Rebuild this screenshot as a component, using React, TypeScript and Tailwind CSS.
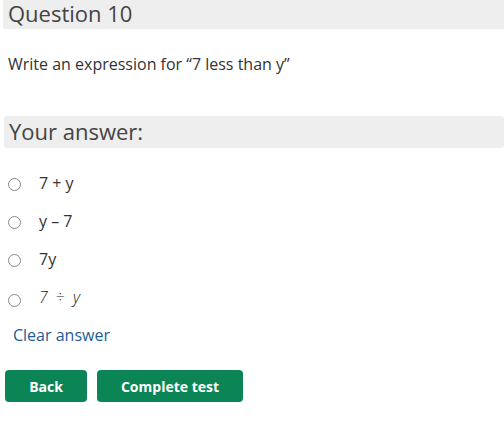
import React from 'react';

const options = ['7 + y', 'y – 7', '7y'];

const Radio = () => (
    <span className="inline-block w-[13px] h-[13px] rounded-full border border-[#8a8a8a] bg-white shrink-0" />
);

const App = () => {
    return (
        <div className="w-[504px] h-[431px] bg-white text-[#333] overflow-hidden" style={{ fontFamily: '"Open Sans", sans-serif' }}>
            <div className="ml-[3px] h-[29px] bg-[#eeeeee] rounded-bl-[3px] pl-[5px] flex items-start">
                <h2 className="text-[22px] leading-[26px] text-[#444]">Question 10</h2>
            </div>

            <p className="mt-[24px] ml-[8px] text-[16px] leading-[22px]">Write an expression for “7 less than y”</p>

            <div className="mt-[41px] ml-[4px] h-[32px] bg-[#eeeeee] rounded-[3px] pl-[5px] flex items-center">
                <h2 className="text-[22px] leading-none text-[#444] -mt-[2px]">Your answer:</h2>
            </div>

            <ul className="mt-[17px] flex flex-col">
                {options.map((o) => (
                    <li key={o} className="h-[38px] flex items-center pl-[8px]">
                        <Radio />
                        <span className="ml-[18px] text-[16px] leading-[22px] -mt-[2px]">{o}</span>
                    </li>
                ))}
                <li className="h-[40px] flex items-center pl-[8px]">
                    <span className="mt-[4px]"><Radio /></span>
                    <span className="ml-[18px] text-[16px] leading-[22px] -mt-[4px] italic font-light text-[#222]">
                        7<span className="not-italic mx-[8px]">÷</span>y
                    </span>
                </li>
            </ul>

            <a href="#" className="block mt-[5px] ml-[13px] text-[16px] leading-[22px] text-[#1d5b94]">Clear answer</a>

            <div className="mt-[24px] ml-[5px] flex gap-[10px]">
                <button className="w-[82px] h-[32px] rounded-[4px] bg-[#0b8456] text-white text-[14px] font-bold">Back</button>
                <button className="w-[146px] h-[32px] rounded-[4px] bg-[#0b8456] text-white text-[14px] font-bold">Complete test</button>
            </div>
        </div>
    );
};

export default App;
